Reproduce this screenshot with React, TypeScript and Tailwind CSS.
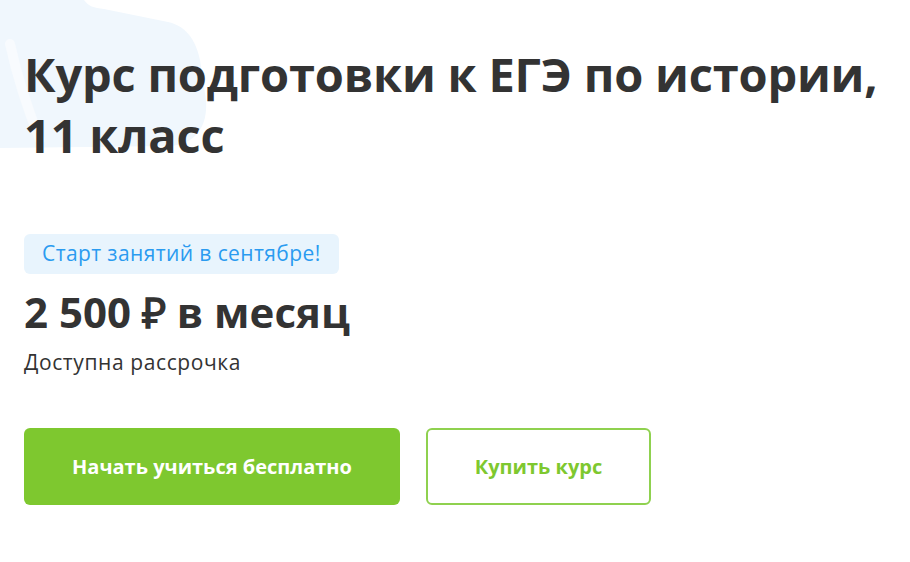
export default function App() {
  return (
    <div className="relative w-[910px] h-[562px] bg-white overflow-hidden font-['Open_Sans',sans-serif] text-[#333333]">
      {/* faint background blob */}
      <svg
        className="absolute left-0 top-0 pointer-events-none"
        width="240"
        height="170"
        viewBox="0 0 240 170"
      >
        <path
          d="M0 0 H84 C88 6 94 8 104 9 L168 22 C186 26 196 40 200 60 L206 100 C208 126 196 144 170 146 L0 148 Z"
          fill="#f0f7fd"
        />
        <path d="M10 44 C18 80 28 110 40 140" stroke="#f8fbfe" strokeWidth="10" fill="none" strokeLinecap="round" />
      </svg>

      <div className="relative px-6 pt-[44px]">
        <h1 className="text-[47px] leading-[61px] font-bold tracking-[-0.2px]">
          Курс подготовки к ЕГЭ по истории,
          <br />
          11 класс
        </h1>

        <div className="mt-[68px] inline-flex h-10 items-center rounded-md bg-[#e8f4fd] px-[18px] text-[21px] tracking-[0.4px] text-[#2a9bf0]">
          Старт занятий в сентябре!
        </div>

        <div className="mt-[12px] text-[42px] leading-[52px] font-bold">2 500 ₽ в месяц</div>

        <div className="mt-[10px] text-[21px] leading-7 tracking-[0.6px] text-[#333333]">Доступна рассрочка</div>

        <div className="mt-[52px] flex gap-[26px]">
          <button className="flex h-[77px] w-[376px] items-center justify-center rounded-md bg-[#7ec82f] text-[20px] font-bold text-white">
            Начать учиться бесплатно
          </button>
          <button className="flex h-[77px] w-[225px] items-center justify-center rounded-md border-2 border-[#8fd14f] bg-white text-[20px] font-bold text-[#7ec82f]">
            Купить курс
          </button>
        </div>
      </div>
    </div>
  );
}
